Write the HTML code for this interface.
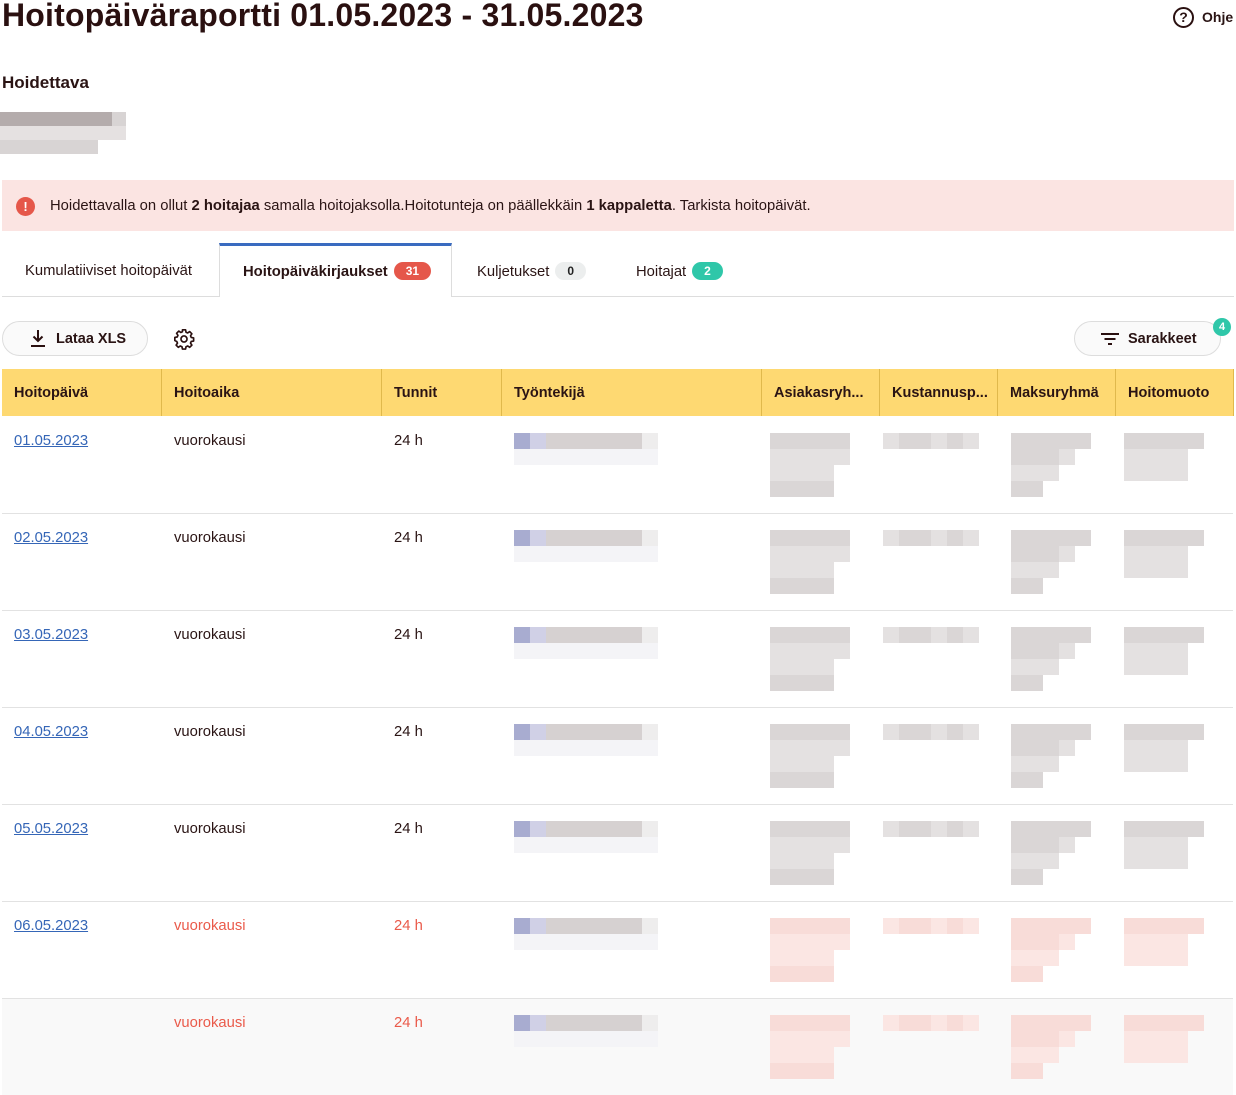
<!DOCTYPE html>
<html><head><meta charset="utf-8"><style>
*{margin:0;padding:0;box-sizing:border-box}
body{width:1236px;height:1094px;overflow:hidden;background:#fff;font-family:"Liberation Sans",sans-serif;color:#2a1414;position:relative}
.a{position:absolute}
h1{position:absolute;left:2px;top:-3px;font-size:32px;font-weight:bold;color:#2a1010;letter-spacing:0.2px;white-space:nowrap}
.b{position:absolute}
.th{position:absolute;top:369px;height:47px;background:#fed972;font-weight:bold;font-size:14.5px;line-height:48px;padding-left:12px;border-right:1px solid #e0b94c;white-space:nowrap;overflow:hidden}
.row{position:absolute;left:2px;width:1231px;height:97px}
.c{position:absolute;top:17px;font-size:14.8px;line-height:17px}
.lnk{color:#3566b7;text-decoration:underline}
.red{color:#ea5a4a}
.pill{display:inline-block;border-radius:9px;font-size:12px;font-weight:bold;height:18px;line-height:18px;padding:0 12px;margin-left:6px;vertical-align:1px}
</style></head><body>
<h1>Hoitopäiväraportti 01.05.2023 - 31.05.2023</h1>
<div class="a" style="left:1173px;top:7px;width:21px;height:21px;border:2px solid #2a1010;border-radius:50%;text-align:center;font-weight:bold;font-size:14px;line-height:17px">?</div>
<div class="a" style="left:1202px;top:9px;font-weight:bold;font-size:14px">Ohje</div>
<div class="a" style="left:2px;top:73px;font-weight:bold;font-size:17px">Hoidettava</div>
<div class="b" style="left:0;top:112px;width:112px;height:14px;background:#b4acac"></div>
<div class="b" style="left:112px;top:112px;width:14px;height:14px;background:#d8d4d4"></div>
<div class="b" style="left:0;top:126px;width:126px;height:14px;background:#e5e1e1"></div>
<div class="b" style="left:0;top:140px;width:98px;height:14px;background:#d8d4d4"></div>

<div class="a" style="left:2px;top:180px;width:1232px;height:51px;background:#fbe4e2"></div>
<div class="a" style="left:16px;top:197px;width:19px;height:19px;border-radius:50%;background:#e5574a;color:#fff;font-weight:bold;font-size:13px;text-align:center;line-height:19px">!</div>
<div class="a" style="left:50px;top:198px;font-size:14.8px;line-height:17px;white-space:nowrap">Hoidettavalla on ollut <b>2 hoitajaa</b> samalla hoitojaksolla.Hoitotunteja on päällekkäin <b>1 kappaletta</b>. Tarkista hoitopäivät.</div>

<div class="a" style="left:2px;top:296px;width:1232px;height:1px;background:#ddd"></div>
<div class="a" style="left:219px;top:243px;width:233px;height:54px;background:#fff;border-left:1px solid #ddd;border-right:1px solid #ddd;border-top:3px solid #3a6bc0"></div>
<div class="a" style="left:25px;top:263px;font-size:14.8px;line-height:17px">Kumulatiiviset hoitopäivät</div>
<div class="a" style="left:243px;top:262px;font-size:14.8px;font-weight:bold">Hoitopäiväkirjaukset<span class="pill" style="background:#e5574a;color:#fff">31</span></div>
<div class="a" style="left:477px;top:262px;font-size:14.8px">Kuljetukset<span class="pill" style="background:#eceeee;color:#222">0</span></div>
<div class="a" style="left:636px;top:262px;font-size:14.8px">Hoitajat<span class="pill" style="background:#2fc7a9;color:#fff">2</span></div>

<div class="a" style="left:2px;top:321px;width:146px;height:35px;border:1px solid #ddd;border-radius:18px;background:#fafafa"></div>
<svg class="a" style="left:29px;top:329px" width="18" height="19" viewBox="0 0 18 19"><path d="M9 1v11M4.5 7.5L9 12l4.5-4.5M2 17h14" stroke="#2a1010" stroke-width="2" fill="none"/></svg>
<div class="a" style="left:56px;top:331px;font-weight:bold;font-size:14.5px;line-height:17px">Lataa XLS</div>
<svg class="a" style="left:173px;top:328px" width="22" height="22" viewBox="0 0 24 24"><path d="M10.3 2h3.4l.5 2.6 1.8.8 2.2-1.5 2.4 2.4-1.5 2.2.8 1.8 2.6.5v3.4l-2.6.5-.8 1.8 1.5 2.2-2.4 2.4-2.2-1.5-1.8.8-.5 2.6h-3.4l-.5-2.6-1.8-.8-2.2 1.5-2.4-2.4 1.5-2.2-.8-1.8L2 13.7v-3.4l2.6-.5.8-1.8-1.5-2.2 2.4-2.4 2.2 1.5 1.8-.8z" stroke="#2a1010" stroke-width="1.8" fill="none" stroke-linejoin="round"/><circle cx="12" cy="12" r="3.3" stroke="#2a1010" stroke-width="1.8" fill="none"/></svg>

<div class="a" style="left:1074px;top:321px;width:147px;height:35px;border:1px solid #ddd;border-radius:18px;background:#fafafa"></div>
<svg class="a" style="left:1100px;top:331px" width="20" height="16" viewBox="0 0 20 16"><path d="M1 3h18M4.5 8h11M8 13h4" stroke="#2a1010" stroke-width="2"/></svg>
<div class="a" style="left:1128px;top:331px;font-weight:bold;font-size:14.5px;line-height:17px">Sarakkeet</div>
<div class="a" style="left:1213px;top:318px;width:18px;height:18px;border-radius:50%;background:#2fc7a9;color:#fff;font-size:11px;font-weight:bold;text-align:center;line-height:18px">4</div>

<div class="th" style="left:2px;width:160px">Hoitopäivä</div>
<div class="th" style="left:162px;width:220px">Hoitoaika</div>
<div class="th" style="left:382px;width:120px">Tunnit</div>
<div class="th" style="left:502px;width:260px">Työntekijä</div>
<div class="th" style="left:762px;width:118px">Asiakasryh...</div>
<div class="th" style="left:880px;width:118px">Kustannusp...</div>
<div class="th" style="left:998px;width:118px">Maksuryhmä</div>
<div class="th" style="left:1116px;width:118px">Hoitomuoto</div>

<div id="rows"></div>
<script>
var dates=["01.05.2023","02.05.2023","03.05.2023","04.05.2023","05.05.2023","06.05.2023",""];
var h="";
for(var i=0;i<7;i++){
 var R=416+i*97, red=i>=5;
 var g1=red?"#f8dcd8":"#dad6d6", g2=red?"#fbe6e3":"#e4e1e1";
 var bg=i==6?"#f9f9f9":"#fff";
 h+='<div class="row" style="top:'+R+'px;background:'+bg+'"></div>';
 if(i>0)h+='<div class="a" style="left:2px;top:'+R+'px;width:1231px;height:1px;background:#e2e2e2"></div>';
 var cl=red?' red':'';
 if(dates[i])h+='<div class="a c lnk" style="left:14px;top:'+(R+17)+'px">'+dates[i]+'</div>';
 h+='<div class="a c'+cl+'" style="left:174px;top:'+(R+17)+'px">vuorokausi</div>';
 h+='<div class="a c'+cl+'" style="left:394px;top:'+(R+17)+'px">24 h</div>';
 var bl=[[514,17,16,16,"#a8acd0"],[530,17,16,16,"#d0d0e6"],[546,17,96,16,"#d6d1d1"],[642,17,16,16,"#eeeded"],[514,33,144,16,"#f4f4f7"],
 [770,17,80,16,g1],[770,33,80,16,g2],[770,49,64,16,g2],[770,65,64,16,g1],
 [883,17,16,16,g2],[899,17,32,16,g1],[931,17,16,16,g2],[947,17,16,16,g1],[963,17,16,16,g2],
 [1011,17,80,16,g1],[1011,33,48,16,g1],[1059,33,16,16,g2],[1011,49,48,16,g2],[1011,65,32,16,g1],
 [1124,17,80,16,g1],[1124,33,64,16,g2],[1124,49,64,16,g2]];
 for(var j=0;j<bl.length;j++){var b=bl[j];h+='<div class="b" style="left:'+b[0]+'px;top:'+(R+b[1])+'px;width:'+b[2]+'px;height:'+b[3]+'px;background:'+b[4]+'"></div>';}
}
document.getElementById("rows").innerHTML=h;
</script>
</body></html>
